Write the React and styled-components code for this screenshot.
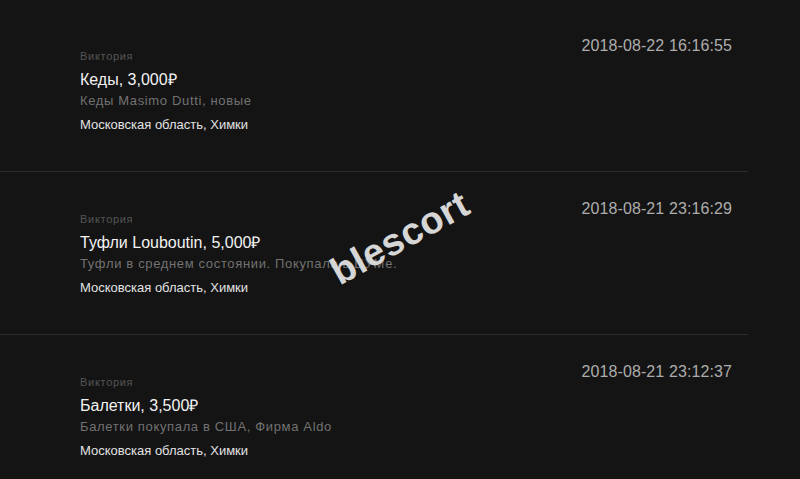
import React from 'react';
import styled, {createGlobalStyle} from 'styled-components';

const ads = [
	{
		id: 1,
		author: 'Виктория',
		title: 'Кеды, 3,000₽',
		text: 'Кеды Masimo Dutti, новые',
		place: 'Московская область, Химки',
		date: '2018-08-22 16:16:55'
	},
	{
		id: 2,
		author: 'Виктория',
		title: 'Туфли Louboutin, 5,000₽',
		text: 'Туфли в среднем состоянии. Покупала в ЦУМе.',
		place: 'Московская область, Химки',
		date: '2018-08-21 23:16:29'
	},
	{
		id: 3,
		author: 'Виктория',
		title: 'Балетки, 3,500₽',
		text: 'Балетки покупала в США, Фирма Aldo',
		place: 'Московская область, Химки',
		date: '2018-08-21 23:12:37'
	}
];

const App = () => (
	<Page>
		<GlobalStyle />
		<List>
			{ads.map(ad => (
				<Item key={ad.id}>
					<Info>
						<Author>{ad.author}</Author>
						<Title>{ad.title}</Title>
						<Text>{ad.text}</Text>
						<Place>{ad.place}</Place>
					</Info>
					<Date>{ad.date}</Date>
				</Item>
			))}
		</List>
		<Watermark>blescort</Watermark>
	</Page>
);

export default App;

const GlobalStyle = createGlobalStyle`
	html, body {
		margin: 0;
		padding: 0;
		background: #141414;
	}
	body {
		font-family: "Liberation Sans", Arial, sans-serif;
	}
`;

const Page = styled.div`
	position: relative;
	width: 800px;
	height: 479px;
	overflow: hidden;
	background: #141414;
	padding-top: 9px;
	box-sizing: border-box;
`;

const List = styled.div`
	display: flex;
	flex-direction: column;
	width: 748px;
`;

const Item = styled.div`
	display: flex;
	justify-content: space-between;
	align-items: flex-start;
	height: 163px;
	box-sizing: border-box;
	padding: 28px 16px 0 80px;
	border-bottom: 1px solid #2c2c2c;
`;

const Info = styled.div`
	display: flex;
	flex-direction: column;
	padding-top: 12px;
`;

const Author = styled.div`
	font-size: 11px;
	line-height: 15px;
	letter-spacing: 0.7px;
	color: #555;
	margin-bottom: 7px;
`;

const Title = styled.div`
	font-size: 16px;
	line-height: 18px;
	color: #f2f2f2;
`;

const Text = styled.div`
	font-size: 13px;
	line-height: 18px;
	letter-spacing: 0.65px;
	color: #727272;
	margin-top: 3px;
`;

const Place = styled.div`
	font-size: 13px;
	line-height: 18px;
	color: #e2e2e2;
	margin-top: 6px;
`;

const Date = styled.div`
	font-size: 16px;
	line-height: 18px;
	letter-spacing: 0.1px;
	color: #adadad;
`;

const Watermark = styled.div`
	position: absolute;
	left: 400px;
	top: 238px;
	transform: translate(-50%, -50%) rotate(-29deg);
	font-size: 38px;
	font-weight: bold;
	letter-spacing: 0.5px;
	color: #d6d6d6;
	white-space: nowrap;
	pointer-events: none;
`;
